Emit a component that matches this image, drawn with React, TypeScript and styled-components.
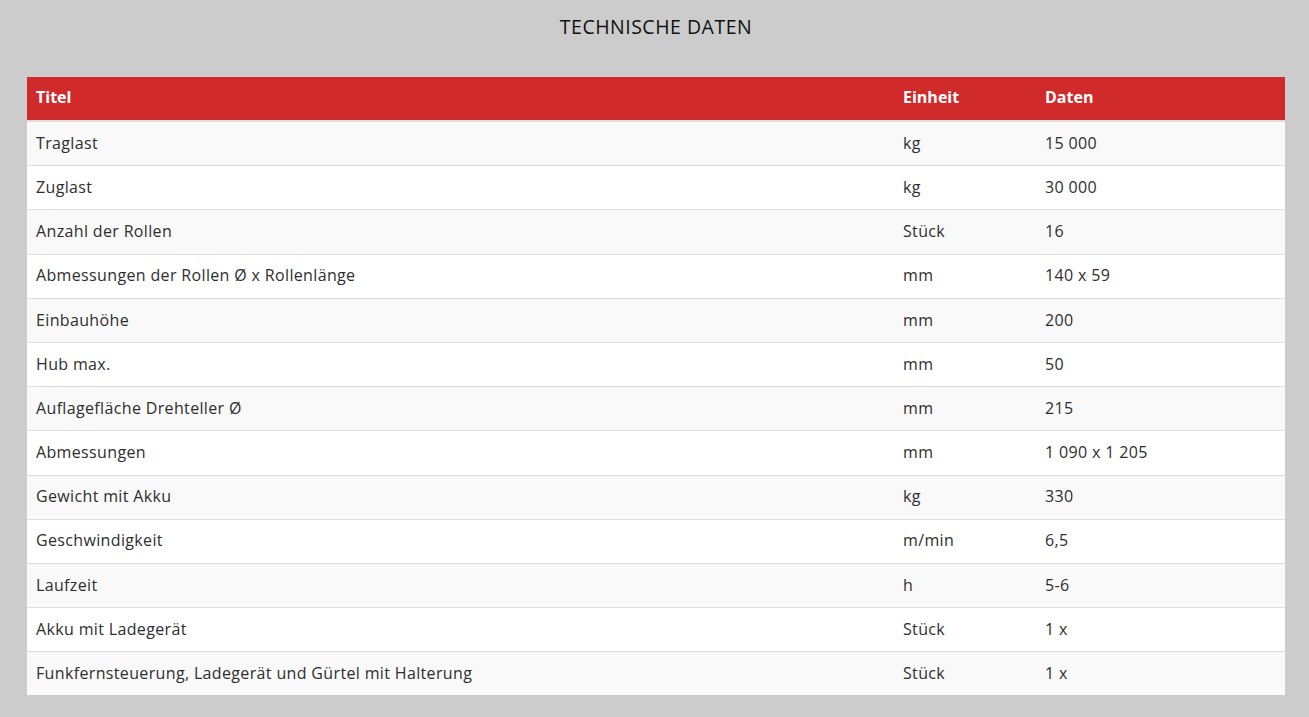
import React from "react";
import styled, { createGlobalStyle } from "styled-components";

const Global = createGlobalStyle`
  html, body { margin: 0; padding: 0; background: #cccccc; }
  body { font-family: "Open Sans", "Noto Sans", sans-serif; color: #333; }
`;

const Page = styled.div`
  padding: 16px 24px 20px 27px;
  display: flex;
  flex-direction: column;
  align-items: stretch;
`;

const Title = styled.h2`
  margin: 0 0 39px 0;
  font-size: 19.5px;
  line-height: 22px;
  font-weight: 400;
  text-align: center;
  color: #111;
  letter-spacing: 0.5px;
`;

const Table = styled.table`
  width: 1258px;
  border-collapse: collapse;
  font-size: 16px;
`;

const HeadCell = styled.th`
  background: #d12a2a;
  color: #fff;
  font-weight: 700;
  text-align: left;
  padding: 8px 9px 11px;
  line-height: 24px;
  border-bottom: 2px solid #dddddd;
`;

const Row = styled.tr<{ $odd: boolean }>`
  background: ${(p) => (p.$odd ? "#f9f9f9" : "#ffffff")};
`;

const Cell = styled.td`
  padding: 8.8px 9px 10.4px;
  line-height: 24px;
  color: #2e2e2e;
  letter-spacing: 0.35px;
  border-top: 1px solid #dddddd;
`;

const rows: [string, string, string][] = [
  ["Traglast", "kg", "15 000"],
  ["Zuglast", "kg", "30 000"],
  ["Anzahl der Rollen", "Stück", "16"],
  ["Abmessungen der Rollen Ø x Rollenlänge", "mm", "140 x 59"],
  ["Einbauhöhe", "mm", "200"],
  ["Hub max.", "mm", "50"],
  ["Auflagefläche Drehteller Ø", "mm", "215"],
  ["Abmessungen", "mm", "1 090 x 1 205"],
  ["Gewicht mit Akku", "kg", "330"],
  ["Geschwindigkeit", "m/min", "6,5"],
  ["Laufzeit", "h", "5-6"],
  ["Akku mit Ladegerät", "Stück", "1 x"],
  ["Funkfernsteuerung, Ladegerät und Gürtel mit Halterung", "Stück", "1 x"],
];

export default function App() {
  return (
    <>
      <Global />
      <Page>
        <Title>TECHNISCHE DATEN</Title>
        <Table>
          <colgroup>
            <col style={{ width: 867 }} />
            <col style={{ width: 142 }} />
            <col style={{ width: 249 }} />
          </colgroup>
          <thead>
            <tr>
              <HeadCell>Titel</HeadCell>
              <HeadCell>Einheit</HeadCell>
              <HeadCell>Daten</HeadCell>
            </tr>
          </thead>
          <tbody>
            {rows.map((r, i) => (
              <Row key={i} $odd={i % 2 === 0}>
                <Cell>{r[0]}</Cell>
                <Cell>{r[1]}</Cell>
                <Cell>{r[2]}</Cell>
              </Row>
            ))}
          </tbody>
        </Table>
      </Page>
    </>
  );
}
